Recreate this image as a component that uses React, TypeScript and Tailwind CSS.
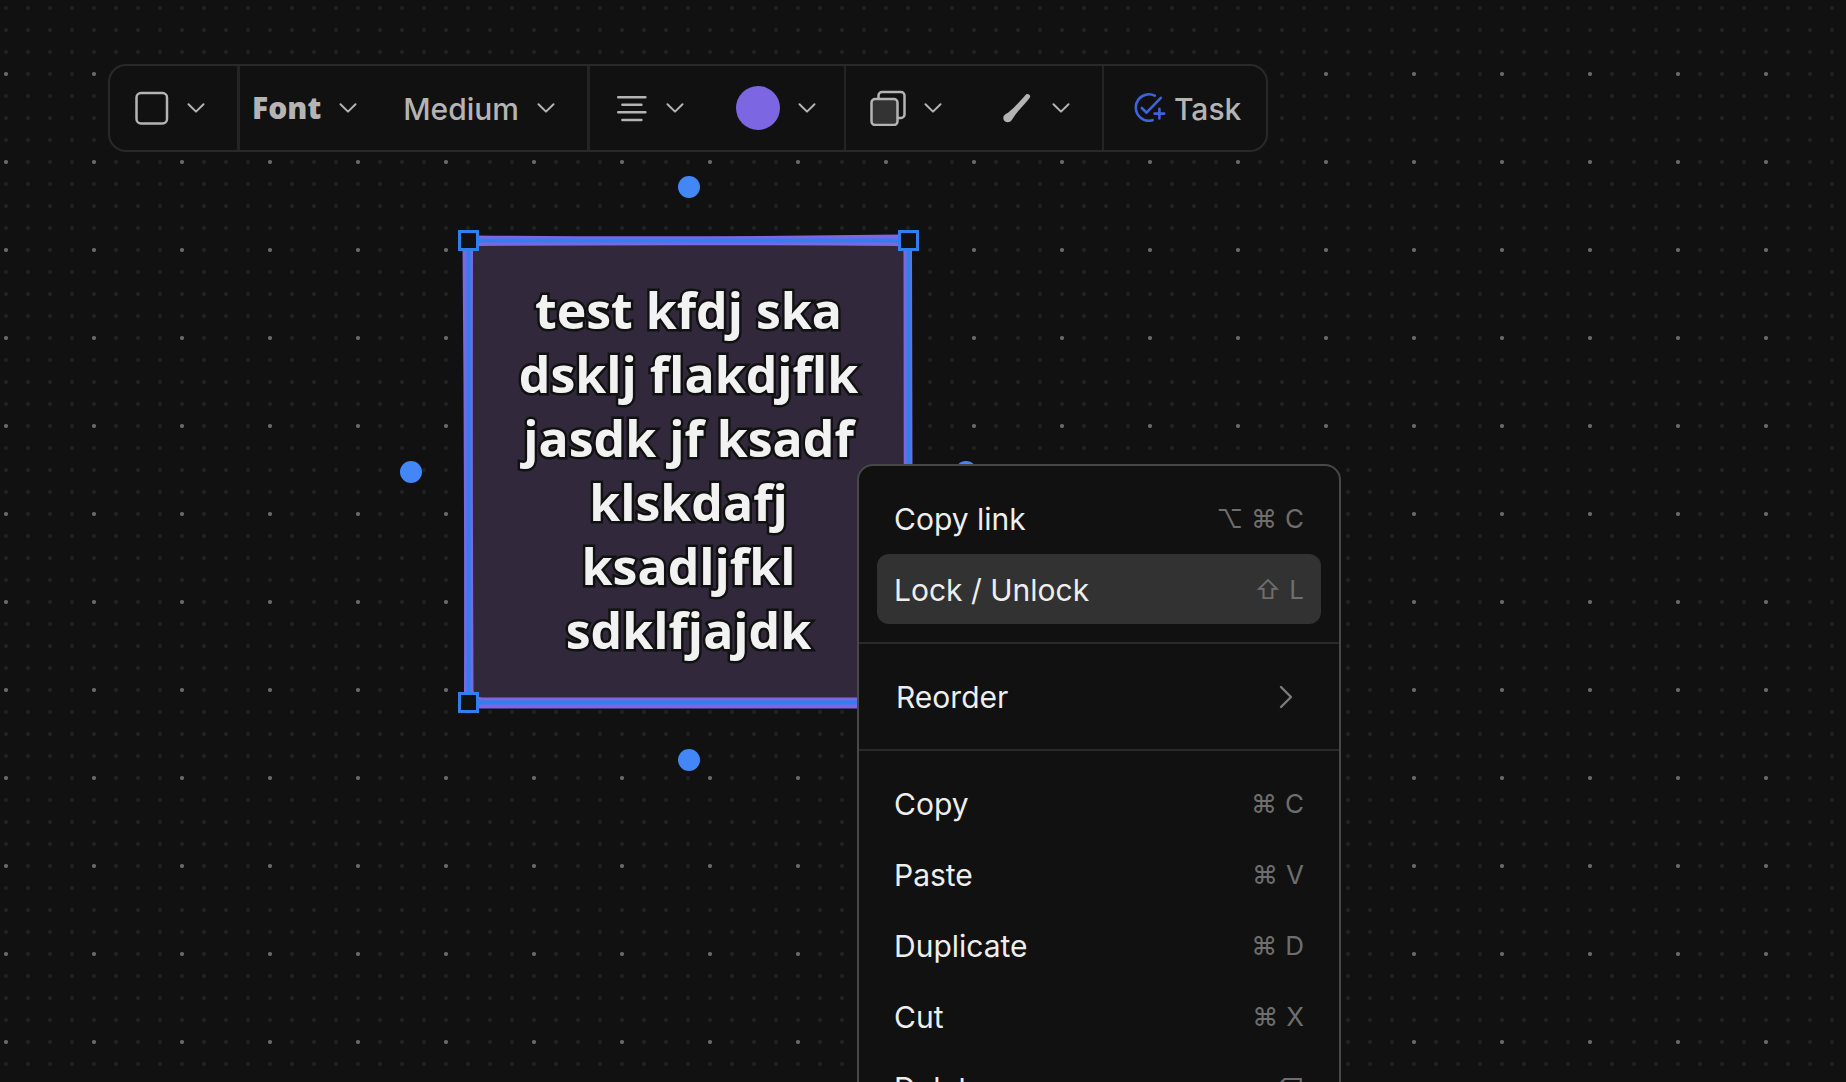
import { ReactNode } from "react";
import clsx from "clsx";

interface MenuItem {
  label: string;
  keys: string[];
  active?: boolean;
}

const linkItems: MenuItem[] = [
  { label: "Copy link", keys: ["⌥", "⌘", "C"] },
  { label: "Lock / Unlock", keys: ["⇧", "L"], active: true },
];

const editItems: MenuItem[] = [
  { label: "Copy", keys: ["⌘", "C"] },
  { label: "Paste", keys: ["⌘", "V"] },
  { label: "Duplicate", keys: ["⌘", "D"] },
  { label: "Cut", keys: ["⌘", "X"] },
  { label: "Delete", keys: ["⌫"] },
];

const noteLines = ["test kfdj ska", "dsklj flakdjflk", "jasdk jf ksadf", "klskdafj", "ksadljfkl", "sdklfjajdk"];

const Chevron = () => (
  <svg width="18" height="10" viewBox="0 0 18 10" fill="none" stroke="currentColor" strokeWidth="2" strokeLinecap="round" strokeLinejoin="round">
    <path d="M1.5 1.2 9 8.6l7.5-7.4" />
  </svg>
);

interface ToolButtonProps {
  label: string;
  children: ReactNode;
}

const ToolButton = ({ label, children }: ToolButtonProps) => (
  <button type="button" aria-label={label} className="flex items-center gap-[18px]">
    {children}
    <Chevron />
  </button>
);

const Toolbar = () => (
  <div
    role="toolbar"
    className="flex h-[88px] w-fit rounded-[18px] border-2 border-[#292929] bg-[#111111] text-[30px] font-medium leading-9 text-[#b4b4b4]"
  >
    <div className="flex border-r-3 border-[#242424] pl-[25px] pr-8">
      <ToolButton label="Shape">
        <svg width="34" height="34" viewBox="0 0 34 34" fill="none" stroke="currentColor" strokeWidth="2.5">
          <rect x="1.5" y="2" width="30.5" height="30.5" rx="4.5" />
        </svg>
      </ToolButton>
    </div>
    <div className="flex gap-[46px] border-r-3 border-[#242424] pl-3 pr-8">
      <ToolButton label="Font">
        <span className="font-['Open_Sans',sans-serif] font-extrabold">Font</span>
      </ToolButton>
      <ToolButton label="Size">
        <span className="pt-0.5">Medium</span>
      </ToolButton>
    </div>
    <div className="flex gap-[52px] border-r-2 border-[#242424] pl-[26px] pr-7">
      <ToolButton label="Align">
        <svg width="32" height="28" viewBox="0 0 32 28" fill="none" stroke="currentColor" strokeWidth="2.5" strokeLinecap="round">
          <path d="M2.2 3.2h27.2M6.4 10.7h19M2.2 18.3h27.2M6.4 25.9h19" />
        </svg>
      </ToolButton>
      <ToolButton label="Color">
        <span className="size-11 rounded-full bg-[#7c66e2]" />
      </ToolButton>
    </div>
    <div className="flex gap-[60px] border-r-2 border-[#242424] pl-6 pr-8">
      <ToolButton label="Fill">
        <svg width="36" height="36" viewBox="0 0 36 36" fill="none" stroke="currentColor" strokeWidth="2.5">
          <rect x="8.5" y="2" width="26" height="26" rx="3.5" />
          <rect x="1.5" y="9" width="26" height="26" rx="3.5" fill="#333333" />
        </svg>
      </ToolButton>
      <ToolButton label="Stroke">
        <svg width="32" height="32" viewBox="0 0 32 32" fill="currentColor">
          <path d="M24 2.500C26 1 29 3 28 5.300c-.4.900-1.200 1.700-2.200 2.900-5 5.600-9.900 10.800-13 15.400-1 1.500-2 3.100-3 4.500-1.600 2.200-4.600 2.900-6.700 1.400-2.200-1.600-2.400-4.900-.3-6.700 1-.8 2.400-1.400 3.800-2.500C11.400 16.600 17 10.200 21.600 5.200c1-1.100 1.600-2 2.400-2.700z" />
        </svg>
      </ToolButton>
    </div>
    <button type="button" className="flex items-center gap-2 pl-7 pr-[25px]">
      <svg width="34" height="32" viewBox="0 0 34 32" fill="none" stroke="#3e63dd" strokeWidth="2.6" strokeLinecap="round" strokeLinejoin="round">
        <path d="M22.8 3.6A13.2 13.2 0 1 0 20.6 28.2" />
        <path d="M9.8 16l4.8 4.7L28.8 5.8" />
        <path d="M27.4 16.8v9.6M22.6 21.6h9.6" />
      </svg>
      <span className="pt-0.5">Task</span>
    </button>
  </div>
);

const Handle = ({ className }: { className: string }) => (
  <span className={clsx("absolute size-[21px] border-3 border-[#2f80ed] bg-[#111111]", className)} />
);

const Connector = ({ className }: { className: string }) => (
  <span className={clsx("absolute size-[22px] rounded-full bg-[#4387f6]", className)} />
);

const Note = () => (
  <div className="absolute left-[468px] top-[240px] h-[463px] w-[441px]">
    {/* uneven hand-drawn edge, with the straight selection line over it */}
    <svg className="absolute inset-0 size-full overflow-visible" viewBox="0 0 441 463" fill="none">
      <path
        d="M8 -4.500Q220 -2.500 432 -5.500Q444 -5 444 8L445 455Q444 468.500 432 468.500L8 468.500Q-4 468 -4 455Q-3.500 230 -5.500 8Q-5 -4.500 8 -4.500Z"
        fill="#7c66e2"
      />
      <path
        d="M12 6Q220 4.500 428 6Q435.500 6 435.500 14L436 450Q436 457.500 428 457.500L14 457.500Q6 457 5.500 450Q4.500 230 5 14Q5 6 12 6Z"
        fill="#31293b"
      />
      <rect x=".5" y=".5" width="440" height="462" stroke="#2f80ed" strokeWidth="4" />
    </svg>
    <p className="absolute inset-0 flex flex-col justify-center pb-1 text-center font-['Open_Sans',sans-serif] text-[50px] font-bold leading-16 text-[#f2f2f2] [paint-order:stroke_fill] [-webkit-text-stroke:5px_#111111]">
      {noteLines.map((line) => (
        <span key={line}>{line}</span>
      ))}
    </p>
    <Handle className="-left-2.5 -top-2.5" />
    <Handle className="-right-2.5 -top-2.5" />
    <Handle className="-bottom-2.5 -left-2.5" />
    <Handle className="-bottom-2.5 -right-2.5" />
    <Connector className="-top-16 left-1/2 -translate-x-1/2" />
    <Connector className="-bottom-17 left-1/2 -translate-x-1/2" />
    <Connector className="-left-17 top-1/2 -translate-y-1/2" />
    <Connector className="-right-17 top-1/2 -translate-y-1/2" />
  </div>
);

const MenuRow = ({ item }: { item: MenuItem }) => (
  <button
    type="button"
    role="menuitem"
    className={clsx("flex h-[70px] items-center justify-between rounded-xl px-[17px] pt-0.5", item.active && "bg-[#323232]")}
  >
    <span>{item.label}</span>
    <span className="flex items-center gap-2 text-[26px] text-[#6e6e6e]">
      {item.keys.map((key) => (
        <kbd key={key} className="font-['Inter','DejaVu_Sans',sans-serif]">
          {key}
        </kbd>
      ))}
    </span>
  </button>
);

const MenuSection = ({ children }: { children: ReactNode }) => (
  <div className="flex flex-col gap-px border-b-2 border-[#2a2a2a] px-[18px] pb-[18px] pt-[17px] last:border-b-0">{children}</div>
);

const ContextMenu = () => (
  <div
    role="menu"
    className="absolute left-[857px] top-[464px] w-[484px] rounded-2xl border-2 border-[#484848] bg-[#111111] text-[30px] leading-9 text-[#eeeeee]"
  >
    <MenuSection>
      {linkItems.map((item) => (
        <MenuRow key={item.label} item={item} />
      ))}
    </MenuSection>
    <MenuSection>
      <button type="button" role="menuitem" className="flex h-[70px] items-center justify-between pl-[19px] pr-7 pt-0.5">
        Reorder
        <svg width="14" height="24" viewBox="0 0 14 24" fill="none" stroke="#7b7b7b" strokeWidth="2.4" strokeLinecap="round" strokeLinejoin="round">
          <path d="M2 2l10 10L2 22" />
        </svg>
      </button>
    </MenuSection>
    <MenuSection>
      {editItems.map((item) => (
        <MenuRow key={item.label} item={item} />
      ))}
    </MenuSection>
  </div>
);

const App = () => {
  return (
    <main className="relative h-screen overflow-hidden bg-[#111111] bg-[radial-gradient(circle,#686868_1.5px,transparent_2.5px),radial-gradient(circle,#222222_1.5px,transparent_2.5px)] bg-size-[88px_88px,22px_22px] bg-position-[50px_30px,17px_19px] px-[108px] pt-16 font-['Inter',sans-serif]">
      <Note />
      <Toolbar />
      <ContextMenu />
    </main>
  );
};

export default App;
